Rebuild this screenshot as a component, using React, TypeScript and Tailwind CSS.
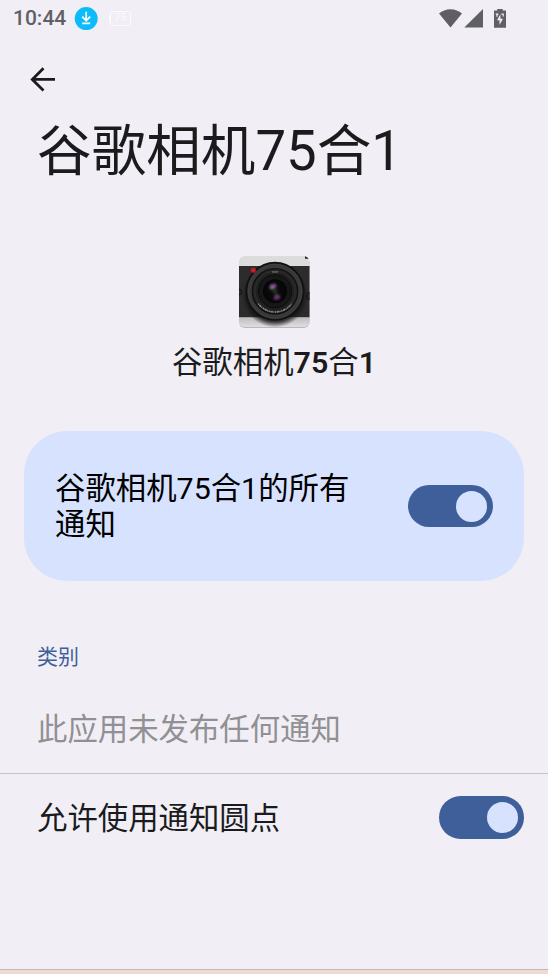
import React from 'react';
import clsx from 'clsx';

const APP_NAME = '谷歌相机75合1';

function StatusBar() {
  return (
    <div className="flex h-[37px] items-center justify-between pl-[13px] pr-[42px] text-[#606064]">
      <div className="flex items-center">
        <span className="w-[54px] text-[21px] font-medium leading-none">10:44</span>
        <svg className="ml-[7px] size-[24px]" viewBox="0 0 24 24">
          <circle cx="12.2" cy="11.6" r="11.5" fill="#0dbbfb" />
          <path d="M12.2 4.8v8.4M8.2 9.7l4 4 4-4M8.2 16.4h8" fill="none" stroke="#fff" strokeWidth="1.7" />
        </svg>
        <div className="ml-[11px] flex items-center text-[#fbfafd]">
          <div className="h-[7px] w-[1px] bg-[#fbfafd]" />
          <div className="flex h-[15px] w-[21px] items-center justify-center rounded-[3px] border border-[#fbfafd] text-[10.5px] leading-none">
            75
          </div>
        </div>
      </div>
      <div className="flex items-center">
        <svg className="h-[20px] w-[23px]" viewBox="0 0 23 20" fill="currentColor">
          <path d="M11.5 18.6 0 4.5C3.2 1.8 7 .2 11.5.2S19.8 1.8 23 4.5z" />
        </svg>
        <svg className="ml-[2px] size-[20px]" viewBox="0 0 20 20" fill="currentColor">
          <path d="M19 0V18.6H.3z" />
        </svg>
        <svg className="ml-[10px] h-[20px] w-[12px]" viewBox="0 0 12 20" fill="currentColor">
          <path d="M3.3 0h5.4v1.6H12V18.8H0V1.6h3.3z" />
          <path d="M1.8 4.6h2.6v1.1h-.8v2.1H2.4V5.7h-.6zM7.4 4.6h2.4v2.8H8.7V5.7H7.4z" fill="#f1eff5" />
          <path d="M6.4 5.2 3 11.2h2.5v4.9L9 9.8H6.4z" fill="#f1eff5" />
        </svg>
      </div>
    </div>
  );
}

function CameraIcon() {
  return (
    <svg className="h-[73px] w-[72px]" viewBox="0 0 72 73">
      <defs>
        <clipPath id="body">
          <rect x="1" y="1" width="70.5" height="71" rx="6" />
        </clipPath>
        <linearGradient id="base" x1="0" y1="0" x2="0" y2="1">
          <stop offset="0" stopColor="#bdbdbf" />
          <stop offset="1" stopColor="#e1e1e2" />
        </linearGradient>
        <radialGradient id="shade">
          <stop offset="0.82" stopColor="#111" stopOpacity="0.8" />
          <stop offset="1" stopColor="#111" stopOpacity="0" />
        </radialGradient>
        <radialGradient id="glass">
          <stop offset="0" stopColor="#263329" />
          <stop offset="0.35" stopColor="#0c090e" />
          <stop offset="1" stopColor="#050505" />
        </radialGradient>
        <filter id="soft">
          <feGaussianBlur stdDeviation="0.9" />
        </filter>
      </defs>
      <rect x="1" y="2" width="70.5" height="71" rx="6" fill="#b9b8bc" />
      <g clipPath="url(#body)">
        <rect width="72" height="73" fill="#dcdcdc" />
        <rect y="11" width="72" height="51.5" fill="#2c2c2c" />
        <rect y="62.5" width="72" height="10" fill="url(#base)" />
        <path d="M67 1h1.5l3 1.8v1H67z" fill="#222" />
        <circle cx="1" cy="37" r="2.8" fill="#292929" stroke="#101010" />
        <circle cx="72" cy="41" r="3.6" fill="#292929" stroke="#101010" />
        <ellipse cx="37" cy="40.5" rx="33" ry="32" fill="url(#shade)" />
      </g>
      <circle cx="37" cy="36.3" r="29.5" fill="#111" />
      <circle cx="37" cy="36.3" r="27.2" fill="#393939" stroke="#4a4a4a" strokeWidth="0.7" />
      <circle cx="37" cy="36.3" r="22.7" fill="#252525" stroke="#111" strokeWidth="1.4" />
      <circle cx="37" cy="36.3" r="20" fill="#202020" stroke="#383838" strokeWidth="0.6" />
      <circle cx="37" cy="36.3" r="16.5" fill="#171717" stroke="#0c0c0c" />
      <circle cx="37" cy="36.3" r="12" fill="url(#glass)" />
      <g filter="url(#soft)">
        <ellipse cx="35" cy="31.3" rx="3.6" ry="2.3" fill="#8a4a93" transform="rotate(-18 35 31.3)" />
        <ellipse cx="34" cy="33.2" rx="2.2" ry="1.4" fill="#618569" />
        <ellipse cx="39" cy="42.5" rx="3.5" ry="2.1" fill="#693372" transform="rotate(-18 39 42.5)" />
        <ellipse cx="38.6" cy="40" rx="1.7" ry="1.1" fill="#426047" />
      </g>
      <path d="M20.3 48.7A21 21 0 0 0 53.8 48.7" fill="none" stroke="#c9c9c9" strokeWidth="1.3" strokeDasharray="1.3 .6 2.4 .5 .8 .8" opacity="0.7" />
      <path d="M34.2 17h6" stroke="#a0a0a0" strokeWidth="1" strokeDasharray="1.1 .4" />
      <circle cx="15.3" cy="15.2" r="2.5" fill="#c5202a" />
    </svg>
  );
}

function Toggle({ checked = true, label }: { checked?: boolean; label: string }) {
  return (
    <button
      type="button"
      role="switch"
      aria-checked={checked}
      aria-label={label}
      className={clsx(
        'flex h-[42.5px] w-[85.5px] shrink-0 items-center rounded-full bg-[#3e5f99] px-[6px]',
        checked ? 'justify-end' : 'justify-start'
      )}
    >
      <span className="size-[31px] rounded-full bg-[#d7e2ff]" />
    </button>
  );
}

export default function App() {
  return (
    <div className="flex h-[974px] w-[548px] flex-col overflow-hidden bg-[#f1eff5] font-[Roboto,'Noto_Sans_CJK_SC',sans-serif] text-[#1b1b1e]">
      <StatusBar />

      <header className="pl-[30px] pt-[30px]">
        <svg className="h-[25px] w-[26px]" viewBox="0 0 26 25" fill="none" stroke="currentColor" strokeWidth="2.8">
          <path d="M25 12.4H2.5M13.5 1.2 2.3 12.4l11.2 11.2" />
        </svg>
        <h1 className="ml-[7px] mt-[24px] h-[70px] whitespace-nowrap text-[54.6px] leading-[70px]">{APP_NAME}</h1>
      </header>

      <section className="mt-[69px] flex flex-col items-center">
        <CameraIcon />
        <div className="mt-[17px] whitespace-nowrap text-[30.4px] leading-[36px]">
          谷歌相机<span className="font-semibold">75</span>合<span className="font-semibold">1</span>
        </div>
      </section>

      <section className="mx-[24px] mt-[50px] flex h-[150px] items-center justify-between rounded-[43px] bg-[#d7e2ff] pl-[31px] pr-[31px] text-black">
        <div className="w-[304px] pt-[2px] text-[30.4px] leading-[36px]">{APP_NAME}的所有通知</div>
        <Toggle label="所有通知" />
      </section>

      <section className="mt-[63px] px-[37px]">
        <h2 className="text-[21px] leading-[26px] text-[#3e5f99]">类别</h2>
        <p className="mt-[42px] text-[30.4px] leading-[36px] text-[#919094]">此应用未发布任何通知</p>
      </section>

      <section className="mt-[25px] flex h-[88px] items-center justify-between border-t border-[#c5c3ca] pl-[37px] pr-[24px]">
        <div className="pt-[3px] text-[30.4px] leading-[36px]">允许使用通知圆点</div>
        <Toggle label="通知圆点" />
      </section>

      <footer className="mt-auto h-[5px] border-t border-[#c5b5b5] bg-[#efd9d4]" />
    </div>
  );
}
